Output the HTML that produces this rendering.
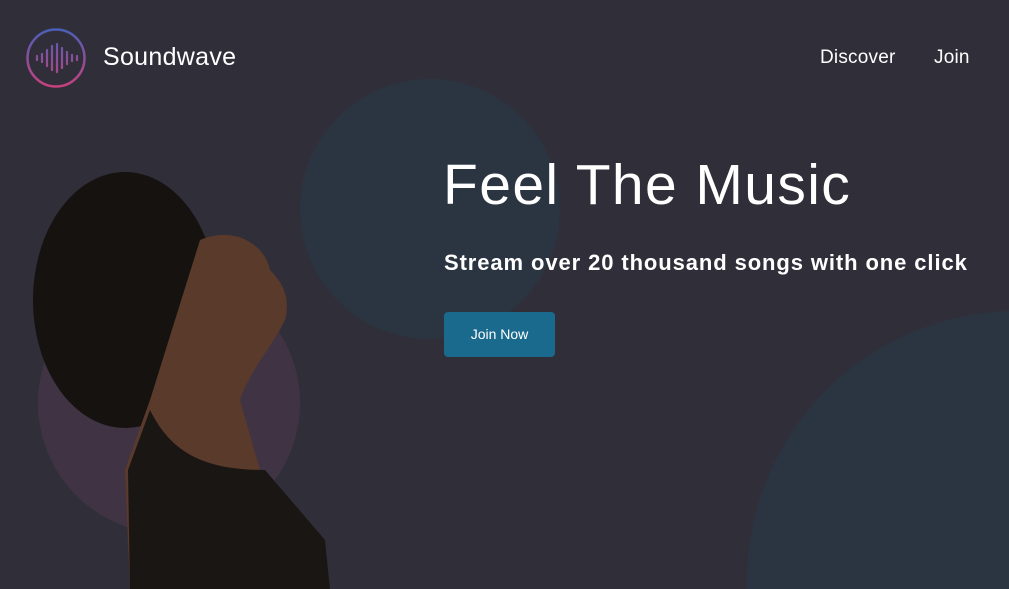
<!DOCTYPE html>
<html><head><style>
html,body{margin:0;width:1009px;height:589px;overflow:hidden}
body{background:#302f39;font-family:"Liberation Sans",sans-serif;color:#fff}
#w{position:relative;width:1009px;height:589px;overflow:hidden}
.c{position:absolute;border-radius:50%}
</style></head><body><div id="w">
<div class="c" style="left:300px;top:79px;width:260px;height:260px;background:#2b3441"></div>
<div class="c" style="left:747px;top:311px;width:540px;height:540px;background:#2b3441"></div>
<div class="c" style="left:38px;top:272px;width:262px;height:262px;background:#3f3344"></div>
<svg style="position:absolute;left:0;top:0" width="1009" height="589">
<defs><linearGradient id="g" gradientUnits="userSpaceOnUse" x1="0" y1="29" x2="0" y2="87"><stop offset="0" stop-color="#4a5fb8"/><stop offset="1" stop-color="#c8407e"/></linearGradient></defs>
<circle cx="56" cy="58" r="28.5" fill="none" stroke="url(#g)" stroke-width="2.5"/>
<g stroke="url(#g)" stroke-width="2.2" stroke-linecap="round">
<line x1="37" y1="56" x2="37" y2="60"/><line x1="42" y1="54" x2="42" y2="62"/><line x1="47" y1="50" x2="47" y2="66"/><line x1="52" y1="46" x2="52" y2="70"/><line x1="57" y1="44" x2="57" y2="72"/><line x1="62" y1="48" x2="62" y2="68"/><line x1="67" y1="52" x2="67" y2="64"/><line x1="72" y1="55" x2="72" y2="61"/><line x1="77" y1="56" x2="77" y2="60"/>
</g>
<ellipse cx="125" cy="300" rx="92" ry="128" fill="#16120f"/>
<path d="M200 240 C235 225 265 245 270 270 C285 285 290 300 285 320 C270 350 250 370 240 400 L260 470 L325 540 L330 589 L130 589 L125 470 L150 400 Z" fill="#5a3a2a"/>
<path d="M150 410 C170 450 200 470 265 470 L325 540 L330 589 L130 589 L128 470 Z" fill="#1a1614"/>
</svg>
<div style="position:absolute;left:103px;top:43px;font-size:25px;letter-spacing:0.3px">Soundwave</div>
<div style="position:absolute;left:820px;top:47px;font-size:19px;letter-spacing:0.2px">Discover</div>
<div style="position:absolute;left:934px;top:47px;font-size:19px;letter-spacing:0.2px">Join</div>
<div style="position:absolute;left:443px;top:152px;font-size:57px;letter-spacing:1.4px;white-space:nowrap">Feel The Music</div>
<div style="position:absolute;left:444px;top:250px;font-size:22px;font-weight:bold;letter-spacing:0.9px;white-space:nowrap">Stream over 20 thousand songs with one click</div>
<div style="position:absolute;left:444px;top:312px;width:111px;height:45px;background:#1a6a8d;border-radius:4px;font-size:14px;line-height:45px;text-align:center">Join Now</div>
</div></body></html>
